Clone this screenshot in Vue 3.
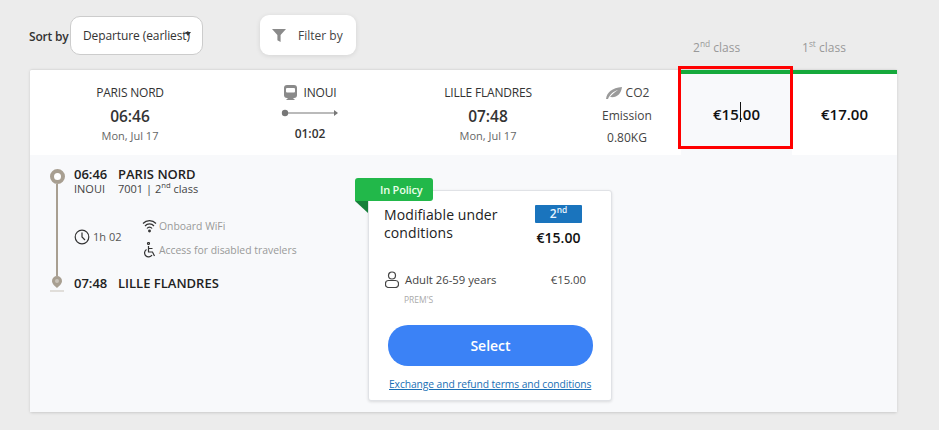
<template>
  <div class="page">
    <div class="toolbar">
      <span class="sort-label">Sort by</span>
      <div class="sort-select">
        <span>Departure (earliest)</span>
        <i class="caret"></i>
      </div>
      <button class="filter-btn">
        <svg width="14" height="13" viewBox="0 0 14 13"><path d="M0 0h14L8.600 6v7l-3.200-1.800V6z" fill="#8a8a8a" /></svg>
        <span>Filter by</span>
      </button>
      <div class="class-labels">
        <span class="class-label">2<sup>nd</sup> class</span>
        <span class="class-label">1<sup>st</sup> class</span>
      </div>
    </div>

    <div class="card">
      <div class="summary">
        <div class="stop">
          <div class="station">PARIS NORD</div>
          <div class="time">06:46</div>
          <div class="date">Mon, Jul 17</div>
        </div>
        <div class="trip">
          <div class="carrier">
            <svg width="13" height="15" viewBox="0 0 13 15">
              <path d="M3 0h7a3 3 0 0 1 3 3v7a3 3 0 0 1-3 3H3a3 3 0 0 1-3-3V3a3 3 0 0 1 3-3z" fill="#8a8a8a" />
              <rect x="2" y="3" width="9" height="4.500" rx="1" fill="#fff" />
              <path d="M2 15l2-2h5l2 2z" fill="#8a8a8a" />
            </svg>
            <span>INOUI</span>
          </div>
          <svg class="arrow" width="58" height="8" viewBox="0 0 58 8">
            <circle cx="4" cy="4" r="3.200" fill="#777" />
            <path d="M4 4h50" stroke="#777" stroke-width="1.200" />
            <path d="M53 1l4 3-4 3z" fill="#777" />
          </svg>
          <div class="duration">01:02</div>
        </div>
        <div class="stop">
          <div class="station">LILLE FLANDRES</div>
          <div class="time">07:48</div>
          <div class="date">Mon, Jul 17</div>
        </div>
        <div class="emission">
          <div class="co2">
            <svg width="17" height="12" viewBox="0 0 17 12">
              <path d="M1 12C2 5 7 1 17 0c-1 7-5 11-12 10 2-3 5-5 8-7-4 1-8 4-10 9z" fill="#9a9a9a" />
            </svg>
            <span>CO2</span>
          </div>
          <div>Emission</div>
          <div>0.80KG</div>
        </div>
        <div class="price-col selected">€15.00</div>
        <div class="price-col">€17.00</div>
        <div class="highlight"><i class="text-cursor"></i></div>
      </div>

      <div class="details">
        <div class="journey">
          <div class="timeline">
            <i class="dot"></i>
            <i class="line"></i>
            <svg width="14" height="16" viewBox="0 0 14 16">
              <path d="M7 0a5 5 0 0 1 5 5c0 3-3 5-5 7-2-2-5-4-5-7a5 5 0 0 1 5-5z" fill="#a89f91" />
              <circle cx="7" cy="5" r="2" fill="#c9c3b9" />
              <path d="M0 15h14" stroke="#c9c3b9" />
            </svg>
          </div>
          <div class="legs">
            <div class="leg-row"><span class="leg-time">06:46</span><span>PARIS NORD</span></div>
            <div class="train-row"><span class="leg-time">INOUI</span><span>7001 | 2<sup>nd</sup> class</span></div>
            <div class="middle">
              <div class="elapsed">
                <svg width="16" height="16" viewBox="0 0 16 16" fill="none" stroke="#333" stroke-width="1.200">
                  <circle cx="8" cy="8" r="6.800" />
                  <path d="M8 3.500V8l3 3" />
                </svg>
                <span>1h 02</span>
              </div>
              <div class="services">
                <div class="service">
                  <svg width="15" height="14" viewBox="0 0 15 14" fill="none" stroke="#333" stroke-width="1.200">
                    <path d="M1 4.500a9 9 0 0 1 13 0M3 7a6 6 0 0 1 9 0M5 9.500a3 3 0 0 1 5 0" />
                    <circle cx="7.500" cy="12" r="0.800" fill="#333" />
                  </svg>
                  <span>Onboard WiFi</span>
                </div>
                <div class="service">
                  <svg width="15" height="16" viewBox="0 0 15 16" fill="none" stroke="#333" stroke-width="1.200">
                    <circle cx="6.500" cy="1.500" r="1" />
                    <path d="M6.500 4v6h4l2 4M6.500 6.500h4" />
                    <path d="M4.500 7.500a4 4 0 1 0 5.500 5.500" />
                  </svg>
                  <span>Access for disabled travelers</span>
                </div>
              </div>
            </div>
            <div class="leg-row"><span class="leg-time">07:48</span><span>LILLE FLANDRES</span></div>
          </div>
        </div>

        <div class="fare">
          <div class="policy-tag">In Policy</div>
          <i class="tag-fold"></i>
          <div class="fare-head">
            <div class="fare-title">Modifiable under conditions</div>
            <div class="fare-class">
              <span class="badge">2<sup>nd</sup></span>
              <span class="fare-price">€15.00</span>
            </div>
          </div>
          <div class="passenger">
            <svg width="14" height="17" viewBox="0 0 14 17" fill="none" stroke="#444" stroke-width="1.200">
              <circle cx="7" cy="4.500" r="3.500" />
              <path d="M3.500 9.500h7a3 3 0 0 1 3 3v1a3 3 0 0 1-3 3h-7a3 3 0 0 1-3-3v-1a3 3 0 0 1 3-3z" />
            </svg>
            <span class="passenger-name">Adult 26-59 years</span>
            <span>€15.00</span>
          </div>
          <div class="fare-code">PREM'S</div>
          <button class="select-btn">Select</button>
          <a class="terms" href="#">Exchange and refund terms and conditions</a>
        </div>
      </div>
    </div>
  </div>
</template>

<script setup>
</script>

<style>
html, body {
  margin: 0;
  background: #ececec;
}
</style>

<style scoped>
.page {
  width: 939px;
  height: 430px;
  box-sizing: border-box;
  padding: 14px 42px 0 30px;
  background: #ececec;
  color: #333;
  font-family: "Open Sans", "Noto Sans", sans-serif;
  font-size: 12px;
  overflow: hidden;
}
sup {
  font-size: 0.7em;
  line-height: 0;
}

/* Top bar */
.toolbar {
  display: flex;
  align-items: flex-start;
  height: 55px;
}
.toolbar > * {
  flex: none;
}
.sort-label {
  margin: 14px 0 0 -1px;
  width: 41px;
  font-size: 12px;
  font-weight: 600;
  white-space: nowrap;
  letter-spacing: -0.2px;
}
.sort-select {
  position: relative;
  display: flex;
  align-items: center;
  box-sizing: border-box;
  width: 133px;
  height: 39px;
  margin-top: 2px;
  padding-left: 12px;
  background: #fff;
  border: 1px solid #ccc;
  border-radius: 10px;
  white-space: nowrap;
  letter-spacing: -0.1px;
}
.caret {
  position: absolute;
  left: 114px;
  top: 15px;
  border: 3px solid transparent;
  border-top: 4px solid #333;
}
.filter-btn {
  display: flex;
  align-items: center;
  gap: 12px;
  box-sizing: border-box;
  width: 96px;
  height: 40px;
  margin: 1px 0 0 57px;
  padding: 0 0 0 12px;
  background: #fff;
  border: 0;
  border-radius: 9px;
  box-shadow: 0 1px 5px rgba(0, 0, 0, 0.1);
  color: #444;
  font: inherit;
}
.class-labels {
  margin-left: 337px;
  margin-top: 25px;
  display: flex;
}
.class-label {
  width: 109px;
  color: #999;
  font-size: 12px;
  white-space: nowrap;
}

/* Result card */
.card {
  height: 343px;
  display: flex;
  flex-direction: column;
  background: #fff;
  border-top: 1px solid #ddd;
  box-sizing: border-box;
  box-shadow: 0 1px 3px rgba(0, 0, 0, 0.15);
  border-radius: 2px;
}
.summary {
  position: relative;
  display: grid;
  grid-template-columns: 200px 160px 196px 82px 13px 111px 105px;
  height: 85px;
  flex: none;
  text-align: center;
}
.stop {
  padding-top: 14px;
}
.station {
  font-size: 12px;
  line-height: 17px;
  letter-spacing: -0.2px;
}
.time {
  margin-top: 4px;
  font-size: 15.500px;
  line-height: 22px;
  font-weight: 600;
}
.date {
  margin-top: 1px;
  font-size: 11px;
  line-height: 15px;
  color: #666;
}
.trip {
  padding-top: 14px;
}
.carrier {
  display: flex;
  align-items: center;
  justify-content: center;
  gap: 7px;
  line-height: 17px;
  letter-spacing: -0.2px;
}
.arrow {
  display: block;
  margin: 8px auto 0;
}
.duration {
  margin-top: 9px;
  font-weight: 600;
  line-height: 16px;
}
.emission {
  padding-top: 12px;
  line-height: 22.500px;
  font-size: 12px;
  color: #444;
}
.co2 {
  display: flex;
  align-items: center;
  justify-content: center;
  gap: 4px;
}
.price-col {
  display: flex;
  align-items: center;
  justify-content: center;
  border-top: 4px solid #16a93c;
  padding-bottom: 2px;
  color: #111;
  font-size: 15px;
  font-weight: 600;
}
.emission + .price-col {
  grid-column: 6;
}
.price-col.selected {
  background: #f8f9fb;
}
.highlight {
  position: absolute;
  left: 648px;
  top: -4px;
  width: 115px;
  height: 83px;
  box-sizing: border-box;
  border: 3px solid #f00;
}
.text-cursor {
  position: absolute;
  left: 59px;
  top: 33px;
  width: 1px;
  height: 20px;
  background: #111;
}

/* Expanded details */
.details {
  position: relative;
  flex: 1;
  display: flex;
  background: #f8f9fb;
}
.journey {
  display: flex;
  width: 338px;
  flex: none;
  padding: 11px 0 0 20px;
  box-sizing: border-box;
}
.timeline {
  display: flex;
  flex-direction: column;
  align-items: center;
  width: 14px;
  height: 123px;
  margin-top: 3px;
  flex: none;
}
.dot {
  flex: none;
  width: 7px;
  height: 7px;
  border: 4px solid #a89f91;
  border-radius: 50%;
  background: #fff;
}
.line {
  flex: 1;
  width: 2px;
  background: #a89f91;
}
.timeline svg {
  flex: none;
}
.legs {
  margin-left: 10px;
}
.leg-row {
  display: flex;
  font-size: 13px;
  font-weight: 600;
  line-height: 16px;
  color: #222;
  white-space: nowrap;
}
.leg-time {
  width: 44px;
}
.train-row {
  display: flex;
  font-size: 11px;
  line-height: 14px;
  color: #444;
  white-space: nowrap;
}
.middle {
  display: flex;
  align-items: center;
  height: 79px;
}
.elapsed {
  display: flex;
  align-items: center;
  gap: 3px;
  width: 68px;
  padding-top: 2px;
  color: #555;
  font-size: 11px;
}
.services {
  display: flex;
  flex-direction: column;
  gap: 8px;
  padding-top: 4px;
  color: #999;
  font-size: 10.400px;
}
.service {
  display: flex;
  align-items: center;
  gap: 2px;
  height: 16px;
  white-space: nowrap;
}

/* Fare box */
.fare {
  position: relative;
  box-sizing: border-box;
  width: 244px;
  height: 211px;
  margin-top: 35px;
  padding: 14px 15px 0;
  background: #fff;
  border: 1px solid #e0e2e6;
  border-radius: 3px;
  box-shadow: 0 1px 3px rgba(0, 0, 0, 0.12);
}
.policy-tag {
  position: absolute;
  left: -14px;
  top: -13px;
  box-sizing: border-box;
  width: 78px;
  height: 23px;
  padding-left: 25px;
  background: #22b84a;
  border-radius: 3px 3px 3px 0;
  color: #e9ffe9;
  font-size: 11px;
  font-weight: 600;
  line-height: 23px;
  letter-spacing: -0.2px;
}
.tag-fold {
  position: absolute;
  left: -14px;
  top: 10px;
  border-top: 12px solid #16803a;
  border-left: 13px solid transparent;
}
.fare-head {
  display: flex;
  justify-content: space-between;
  height: 66px;
}
.fare-title {
  width: 135px;
  margin-top: 1px;
  color: #222;
  font-size: 14px;
  line-height: 18px;
  letter-spacing: 0.1px;
}
.fare-class {
  display: flex;
  flex-direction: column;
  align-items: center;
  margin-right: 14px;
}
.badge {
  width: 47px;
  height: 18px;
  background: #1a74bd;
  border-radius: 1px;
  color: #e8f4ff;
  font-size: 12px;
  font-weight: 600;
  line-height: 18px;
  text-align: center;
}
.fare-price {
  margin-top: 5px;
  font-size: 14px;
  font-weight: 600;
  line-height: 20px;
  color: #111;
}
.passenger {
  display: flex;
  align-items: center;
  padding: 0 10px 0 1px;
  font-size: 11.300px;
  color: #444;
}
.passenger-name {
  flex: 1;
  margin-left: 6px;
}
.fare-code {
  margin: 6px 0 0 20px;
  color: #aaa;
  font-size: 8.500px;
  line-height: 12px;
}
.select-btn {
  display: block;
  width: 205px;
  height: 41px;
  margin: 19px 0 0 4px;
  border: 0;
  border-radius: 20px;
  background: #3b82f6;
  color: #fff;
  font: inherit;
  font-size: 14px;
  font-weight: 600;
}
.terms {
  display: block;
  margin: 11px 0 0 5px;
  width: 204px;
  color: #1a6fb5;
  font-size: 10.300px;
  line-height: 14px;
  white-space: nowrap;
  letter-spacing: -0.1px;
}
</style>
